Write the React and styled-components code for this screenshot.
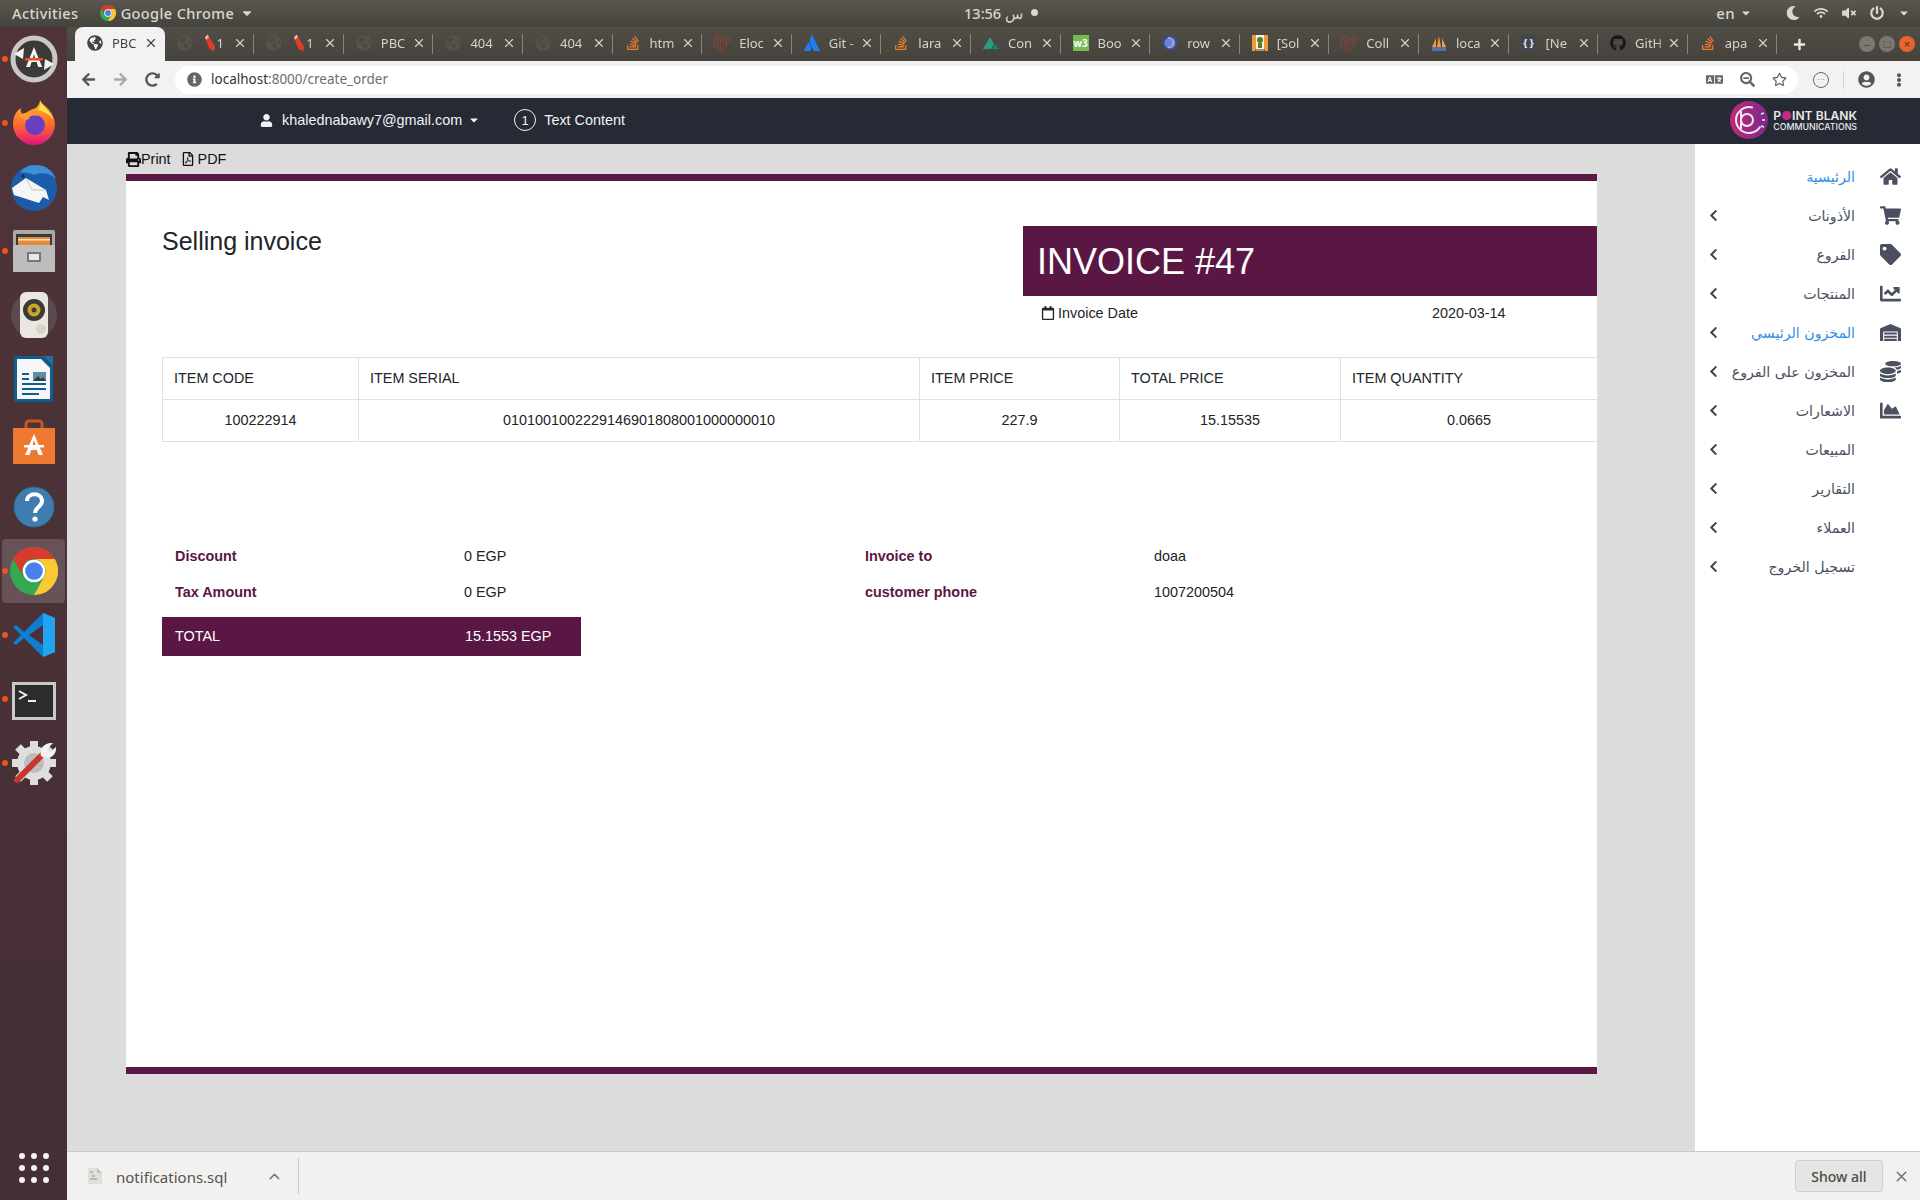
import styled, { createGlobalStyle } from "styled-components";
import {
  FaHome,
  FaShoppingCart,
  FaTag,
  FaChartLine,
  FaWarehouse,
  FaCoins,
  FaChartArea,
  FaChevronLeft,
  FaPrint,
  FaRegFilePdf,
  FaRegCalendar,
  FaUser,
  FaLaravel,
  FaAtlassian,
  FaStackOverflow,
  FaGithub,
  FaGlobeAmericas,
  FaCaretDown,
  FaMoon,
  FaWifi,
  FaVolumeMute,
  FaPowerOff,
  FaArrowLeft,
  FaArrowRight,
  FaRedoAlt,
  FaInfoCircle,
  FaRegStar,
  FaSearchMinus,
  FaUserCircle,
  FaEllipsisV,
  FaLanguage,
  FaPlus,
} from "react-icons/fa";
import { FiX, FiChevronUp } from "react-icons/fi";

const GlobalStyle = createGlobalStyle`
  html, body {
    margin: 0;
    padding: 0;
    background: #dcdcdc;
  }
  body {
    font-family: "Liberation Sans", Arial, sans-serif;
    font-size: 14.4px;
    color: #212529;
  }
  * { box-sizing: border-box; }
`;

const Screen = styled.div`
  width: 1920px;
  height: 1200px;
  overflow: hidden;
  display: flex;
  flex-direction: column;
`;

/* gnome top bar */
const TopBar = styled.div`
  height: 27px;
  flex: none;
  display: grid;
  grid-template-columns: 1fr auto 1fr;
  align-items: center;
  background: linear-gradient(#5a574f, #44433d);
  color: #d8d8d2;
  font-family: "Noto Sans", sans-serif;
  font-size: 14.5px;
  font-weight: 500;
  letter-spacing: 0.4px;
  padding: 0 10px 2px 12px;
`;

const TopLeft = styled.div`
  display: flex;
  align-items: center;
`;

const TopLabel = styled.span`
  margin-right: ${p => p.$gap || 0}px;
`;

const Clock = styled.div`
  display: flex;
  align-items: center;
  gap: 8px;
  margin-left: 80px;
`;

const ClockDot = styled.span`
  width: 7px;
  height: 7px;
  border-radius: 50%;
  background: #d8d8d2;
`;

const TopRight = styled.div`
  display: flex;
  align-items: center;
  justify-content: flex-end;
  gap: 14px;
  font-size: 15px;

  svg {
    font-size: 14px;
  }
`;

const Lang = styled.span`
  display: flex;
  align-items: center;
  gap: 5px;
  margin-right: 20px;
`;

const Body = styled.div`
  flex: 1;
  display: flex;
  min-height: 0;
`;

/* ubuntu dock */
const Dock = styled.div`
  width: 67px;
  flex: none;
  display: flex;
  flex-direction: column;
  background: linear-gradient(#503439, #432f34);
`;

const DockItem = styled.div`
  height: 64px;
  flex: none;
  display: flex;
  align-items: center;
  justify-content: center;
  position: relative;
  border-radius: 4px;
  margin: 0 2px;
  background: ${p => (p.$focused ? "rgba(255,255,255,0.16)" : "transparent")};

  svg {
    width: 48px;
    height: 48px;
  }
`;

const RunDot = styled.span`
  position: absolute;
  left: 0;
  top: 29px;
  width: 6px;
  height: 6px;
  border-radius: 50%;
  background: #e95420;
`;

const AppGrid = styled.div`
  margin-top: auto;
  margin-bottom: 17px;
  align-self: center;
  display: grid;
  grid-template-columns: repeat(3, 6px);
  gap: 6px;
`;

const GridDot = styled.span`
  width: 6px;
  height: 6px;
  border-radius: 50%;
  background: #f4f2f2;
`;

/* chrome */
const Browser = styled.div`
  flex: 1;
  min-width: 0;
  display: flex;
  flex-direction: column;
`;

const TabStrip = styled.div`
  height: 34px;
  flex: none;
  display: flex;
  align-items: stretch;
  padding-left: 8px;
  background: linear-gradient(#504d45, #45433c);
`;

const Tab = styled.div`
  width: 89.6px;
  flex: none;
  display: flex;
  align-items: center;
  padding: 0 7px 2px 12px;
  position: relative;
  font-family: "Noto Sans", sans-serif;
  font-size: 13px;
  color: ${p => (p.$active ? "#45433d" : "#d4d3ce")};
  background: ${p => (p.$active ? "#f2f2f2" : "transparent")};
  border-radius: ${p => (p.$active ? "8px 8px 0 0" : "0")};

  &::after {
    content: "";
    display: ${p => (p.$active ? "none" : "block")};
    position: absolute;
    right: 0;
    top: 7px;
    bottom: 7px;
    width: 1px;
    background: #86847c;
  }
`;

const FavIcon = styled.span`
  width: 16px;
  height: 16px;
  flex: none;
  margin-right: 9px;
  display: flex;
  align-items: center;
  justify-content: center;
  font-size: ${p => (p.$small ? 10 : 16)}px;
  font-weight: ${p => (p.$small ? 700 : 400)};
  color: ${p => p.$color || "#45433d"};
  background: ${p => p.$bg || "transparent"};
`;

const TabTitle = styled.span`
  flex: 1;
  min-width: 0;
  overflow: hidden;
  white-space: nowrap;
  display: flex;
  align-items: center;
  -webkit-mask-image: linear-gradient(90deg, #000 70%, transparent);
  mask-image: linear-gradient(90deg, #000 70%, transparent);
`;

const TabClose = styled.span`
  flex: none;
  display: flex;
  font-size: 14px;
`;

const NewTab = styled.span`
  margin-left: 16px;
  display: flex;
  align-items: center;
  color: #e8e8e4;
  font-size: 13px;
`;

const WinButtons = styled.div`
  margin-left: auto;
  padding-right: 5px;
  display: flex;
  align-items: center;
  gap: 4px;
`;

const WinButton = styled.span`
  width: 16px;
  height: 16px;
  border-radius: 50%;
  display: flex;
  align-items: center;
  justify-content: center;
  font-size: 11px;
  line-height: 1;
  color: ${p => (p.$close ? "#4a2a1a" : "#4a4944")};
  background: ${p => (p.$close ? "#e9632e" : "#7a7870")};
`;

const Toolbar = styled.div`
  height: 37px;
  flex: none;
  display: flex;
  align-items: center;
  padding-left: 14px;
  background: #f2f2f2;
  color: #5a5a5a;
`;

const NavButton = styled.span`
  width: 32px;
  flex: none;
  display: flex;
  font-size: 15px;
  color: ${p => (p.$off ? "#a8a8a8" : "#555")};
`;

const Omnibox = styled.div`
  width: 1623px;
  height: 28px;
  margin-left: -2px;
  display: flex;
  align-items: center;
  padding: 0 11px 0 12px;
  background: #fff;
  border-radius: 14px;
  font-family: "Noto Sans", sans-serif;
  font-size: 13.5px;
  color: #6e6e6e;
`;

const Url = styled.span`
  flex: 1;
  margin-left: 9px;
  padding-bottom: 2px;

  b {
    font-weight: 400;
    color: #333;
  }
`;

const OmniIcon = styled.span`
  display: flex;
  font-size: ${p => p.$size || 15}px;
  margin-left: ${p => p.$gap || 0}px;
  color: #666;
`;

const ToolIcons = styled.div`
  flex: 1;
  display: flex;
  align-items: center;
  font-size: 17px;
  color: #555;
`;

const ExtBadge = styled.span`
  width: 16px;
  height: 16px;
  margin-left: 15px;
  border: 1px solid #666;
  border-radius: 50%;
  display: flex;
  align-items: center;
  justify-content: center;
  font-size: 8px;
  line-height: 1;
`;

const ToolDivider = styled.span`
  width: 1px;
  height: 18px;
  margin: 0 14px;
  background: #d0d0d0;
`;

const MenuDots = styled.span`
  display: flex;
  margin-left: 17px;
  font-size: 14px;
`;

/* page header */
const NavBar = styled.div`
  height: 46px;
  flex: none;
  display: flex;
  align-items: center;
  padding: 0 0 2px 193px;
  background: #252a35;
  color: #f2f2f2;
`;

const UserMenu = styled.div`
  display: flex;
  align-items: center;
  gap: 9px;
`;

const UserCaret = styled.span`
  margin-left: -3px;
  display: flex;
  font-size: 12px;
`;

const CountCircle = styled.span`
  width: 22px;
  height: 22px;
  margin-left: 34px;
  border: 1px solid #f2f2f2;
  border-radius: 50%;
  display: flex;
  align-items: center;
  justify-content: center;
  font-size: 13px;
`;

const NavText = styled.span`
  margin-left: 8px;
`;

const Brand = styled.div`
  margin-left: auto;
  margin-right: 63px;
  display: flex;
  align-items: center;
  gap: 5px;

  svg {
    width: 38px;
    height: 38px;
  }
`;

const BrandText = styled.div`
  display: flex;
  flex-direction: column;
  font-family: Inter, sans-serif;
  color: #e9e9ea;
`;

const BrandName = styled.span`
  font-size: 12.1px;
  font-weight: 600;
  line-height: 13px;
  white-space: nowrap;

  i {
    font-style: normal;
    color: #c22a86;
  }
`;

const BrandSub = styled.span`
  font-size: 8.8px;
  font-weight: 500;
  line-height: 10px;
`;

const Main = styled.div`
  flex: 1;
  min-height: 0;
  display: flex;
  background: #dcdcdc;
`;

const Content = styled.div`
  flex: 1;
  min-width: 0;
  padding-left: 59px;
`;

const Actions = styled.div`
  height: 30px;
  display: flex;
  align-items: center;
  color: #111;
`;

const Action = styled.span`
  display: flex;
  align-items: center;
  gap: ${p => p.$gap}px;
  margin-right: 10px;
`;

const Sheet = styled.div`
  width: 1471px;
  height: 900px;
  display: flex;
  flex-direction: column;
  padding-left: 36px;
  background: #fff;
  border-top: 7px solid #5a1744;
  border-bottom: 7px solid #5a1744;
`;

const SheetHead = styled.div`
  display: flex;
  justify-content: space-between;
  padding-top: 45px;
`;

const Title = styled.h1`
  margin: 0;
  font-size: 25px;
  font-weight: 400;
  line-height: 30px;
  color: #212529;
`;

const InvoiceMeta = styled.div`
  width: 574px;
`;

const InvoiceBanner = styled.div`
  height: 70px;
  display: flex;
  align-items: center;
  padding: 2px 0 0 14px;
  background: #5a1744;
  color: #fff;
  font-size: 36px;
`;

const MetaRow = styled.div`
  height: 34px;
  display: flex;
  align-items: center;
  padding-left: 18px;
`;

const MetaLabel = styled.span`
  width: 391px;
  display: flex;
  align-items: center;
  gap: 3px;
`;

const ItemsTable = styled.table`
  width: 1435px;
  margin-top: 27px;
  border-collapse: collapse;
  table-layout: fixed;
`;

const Th = styled.th`
  width: ${p => p.$w}px;
  height: 42px;
  padding: 0 11px 2px;
  border: 1px solid #dee2e6;
  font-weight: 400;
  text-align: left;
`;

const Td = styled.td`
  height: 42px;
  padding: 0 11px 2px;
  border: 1px solid #dee2e6;
  text-align: center;
`;

const Summary = styled.div`
  display: flex;
  gap: 271px;
  margin-top: 96px;
`;

const SummaryCol = styled.div`
  width: 419px;
`;

const SummaryRow = styled.div`
  height: 36px;
  display: flex;
  align-items: center;
  padding-left: 13px;
`;

const SummaryLabel = styled.span`
  width: 289px;
  font-weight: 700;
  color: #5a1744;
`;

const TotalRow = styled.div`
  height: 39px;
  margin-top: 7px;
  display: flex;
  align-items: center;
  padding: 0 0 2px 13px;
  background: #5a1744;
  color: #fff;
`;

const TotalLabel = styled.span`
  width: 290px;
`;

/* right side menu */
const SideMenu = styled.div`
  width: 225px;
  flex: none;
  padding-top: 13px;
  background: #fff;
  direction: rtl;
`;

const MenuItem = styled.div`
  height: 39px;
  display: flex;
  align-items: center;
  padding: 0 18px 0 12px;
  font-family: "DejaVu Sans", sans-serif;
  font-size: 14.2px;
  color: ${p => (p.$active ? "#2f8fe8" : "#4a5060")};
`;

const MenuIcon = styled.span`
  width: 24px;
  flex: none;
  display: flex;
  justify-content: center;
  margin-left: 23px;
  color: #4a5060;
  font-size: 21px;
`;

const MenuChevron = styled.span`
  margin-right: auto;
  display: flex;
  color: #3d4350;
  font-size: 13px;
`;

/* download shelf */
const Shelf = styled.div`
  height: 49px;
  flex: none;
  display: flex;
  align-items: center;
  padding: 0 10px 0 21px;
  background: #f2f1f0;
  border-top: 1px solid #c9c9c9;
  font-family: "Noto Sans", sans-serif;
  color: #55534f;

  svg.file {
    flex: none;
  }
`;

const FileName = styled.span`
  margin: 1px 0 0 14px;
  font-size: 15px;
  width: 150px;
`;

const ShelfChevron = styled.span`
  display: flex;
  font-size: 17px;
  color: #777;
`;

const ShelfDivider = styled.span`
  width: 1px;
  height: 36px;
  margin-left: 15px;
  background: #c9c9c9;
`;

const ShowAll = styled.button`
  margin-left: auto;
  width: 88px;
  height: 32px;
  border: 1px solid #d2d0cd;
  border-radius: 3px;
  background: #e6e5e3;
  color: #4a4a48;
  font-family: "Noto Sans", sans-serif;
  font-size: 14px;
  font-weight: 500;
`;

const ShelfClose = styled.span`
  margin-left: 10px;
  display: flex;
  font-size: 17px;
  color: #6d6d6b;
`;

const ChromeLogo = props => (
  <svg viewBox="0 0 24 24" {...props}>
    <circle cx="12" cy="12" r="12" fill="#34a853" />
    <path d="M22.4 6A12 12 0 0 1 12 24L17 15A6 6 0 0 0 12 6Z" fill="#fcc934" />
    <path d="M12 0A12 12 0 0 1 22.4 6H12A6 6 0 0 0 6.8 15L1.6 6A12 12 0 0 1 12 0Z" fill="#d93a2e" />
    <circle cx="12" cy="12" r="5.6" fill="#fff" />
    <circle cx="12" cy="12" r="4.4" fill="#4a80ee" />
  </svg>
);

const UpdaterIcon = () => (
  <svg viewBox="0 0 48 48">
    <circle cx="24" cy="24" r="21" fill="none" stroke="#c8c8c6" strokeWidth="5" />
    <circle cx="24" cy="24" r="18" fill="#3b3a38" />
    <path d="M4 19l10-6-1 11zM44 29l-10 6 1-11z" fill="#f4f4f4" />
    <path d="M24 12l-8 20h4l1.6-5h5l1.6 5h4zM23 23l1-4 1 4z" fill="#f6f6f6" />
    <rect x="15" y="23" width="18" height="2.5" fill="#e95420" />
  </svg>
);

const FirefoxIcon = () => (
  <svg viewBox="0 0 48 48">
    <defs>
      <linearGradient id="ff" x1="0" y1="0" x2="0" y2="1">
        <stop offset="0" stopColor="#ffbd2e" />
        <stop offset="0.55" stopColor="#ff6a2b" />
        <stop offset="1" stopColor="#e3127f" />
      </linearGradient>
    </defs>
    <path d="M30 1c1 5 14 9 15 24A21 21 0 0 1 3 25C3 18 6 12 11 9c-1 4 1 6 3 7 3-4 8-6 12-7 2-2 4-5 4-8z" fill="url(#ff)" />
    <circle cx="25" cy="26" r="10" fill="#6b3dc0" />
    <path d="M9 16c6-3 14-4 19 1-6-2-9 0-9 3-5 2-9-1-10-4z" fill="#ff9a2e" />
    <path d="M30 1c1 6 12 12 13 20-3-6-10-9-15-10 2-3 3-6 2-10z" fill="#ffe14d" />
  </svg>
);

const ThunderbirdIcon = () => (
  <svg viewBox="0 0 48 48">
    <circle cx="24" cy="25" r="23" fill="#1c5ba8" />
    <path d="M10 10c3-5 8-8 16-8 10 0 17 6 20 14-6-6-14-7-22-4-4-2-9-3-14-2z" fill="#3a8fd8" />
    <circle cx="13" cy="13" r="1.500" fill="#10294a" />
    <path d="M2 25l14-10 20 12 3 10-6-3-4 6-25-8z" fill="#f6f6f6" />
    <path d="M16 15l6 12 14 0" fill="none" stroke="#c4c4c4" strokeWidth="1" />
  </svg>
);

const FilesIcon = () => (
  <svg viewBox="0 0 48 48">
    <rect x="3" y="3" width="42" height="42" rx="2" fill="#a9a9a7" />
    <rect x="6" y="7" width="36" height="13" fill="#3a3936" />
    <rect x="8" y="10" width="32" height="8" fill="#e78a3a" />
    <rect x="8" y="12" width="32" height="1.500" fill="#f6e3c4" />
    <rect x="3" y="18" width="42" height="27" rx="1" fill="#bdbdbb" />
    <rect x="17" y="25" width="14" height="10" rx="1" fill="#777" />
    <rect x="19" y="27" width="10" height="6" fill="#e8e8e8" />
  </svg>
);

const SpeakerIcon = () => (
  <svg viewBox="0 0 48 48">
    <circle cx="24" cy="24" r="23" fill="#5a4a50" />
    <rect x="10" y="1" width="28" height="46" rx="6" fill="#e9e7df" />
    <circle cx="24" cy="19" r="11" fill="#3b3a36" />
    <circle cx="24" cy="19" r="6.500" fill="#c9a62a" />
    <circle cx="24" cy="19" r="2.500" fill="#3b3a36" />
    <circle cx="31" cy="38" r="5" fill="#d6d4cc" />
  </svg>
);

const WriterIcon = () => (
  <svg viewBox="0 0 48 48">
    <path d="M6 1h26l11 11v33a2 2 0 0 1-2 2H6a2 2 0 0 1-2-2V3a2 2 0 0 1 2-2z" fill="#125d8f" />
    <path d="M7 4h24l9 9v31H7z" fill="#f4f6f7" />
    <path d="M33 1h10v10z" fill="#1b6fa8" />
    <path d="M12 18h7v2h-7zM12 23h7v2h-7zM12 28h24v2H12zM12 33h24v2H12zM12 38h17v2H12z" fill="#125d8f" />
    <rect x="23" y="17" width="13" height="9" fill="#5f8ea8" />
    <path d="M23 26l5-5 3 3 2-2 3 4z" fill="#3a3a38" />
  </svg>
);

const StoreIcon = () => (
  <svg viewBox="0 0 48 48">
    <path d="M16 10V5a3 3 0 0 1 3-3h10a3 3 0 0 1 3 3v5" fill="none" stroke="#c9551f" strokeWidth="3" />
    <path d="M3 9h42v36H3z" fill="#ee7a32" />
    <path d="M24 15l-9 21h4.500l1.600-5h5.800l1.600 5h4.500zM22.500 26l1.500-5 1.500 5z" fill="#fff" />
    <rect x="14" y="26" width="20" height="2.500" fill="#fff" />
  </svg>
);

const HelpIcon = () => (
  <svg viewBox="0 0 48 48">
    <circle cx="24" cy="24" r="20" fill="#3f7cb0" stroke="#2f6896" />
    <path d="M17 18c0-9 15-9 15 0 0 6-7 6-7 12" fill="none" stroke="#fff" strokeWidth="4" />
    <circle cx="25" cy="36" r="2.600" fill="#fff" />
  </svg>
);

const VsCodeIcon = () => (
  <svg viewBox="0 0 48 48">
    <path d="M33 2L14 21 6 14l-3 2 8 8-8 8 3 2 8-7 19 19 12-5V7z" fill="#0e7fd0" />
    <path d="M33 2l12 5v34l-12 5z" fill="#22a5f1" />
    <path d="M33 14v20L19 24z" fill="#4a3138" />
  </svg>
);

const TerminalIcon = () => (
  <svg viewBox="0 0 48 48">
    <rect x="2" y="7" width="44" height="38" fill="#c9c9c7" />
    <rect x="5" y="10" width="38" height="32" fill="#2c2c2a" />
    <path d="M9 16l7 4-7 4" fill="none" stroke="#f2f2f2" strokeWidth="2" />
    <rect x="18" y="25" width="8" height="2" fill="#f2f2f2" />
  </svg>
);

const SettingsIcon = () => (
  <svg viewBox="0 0 48 48">
    <path d="M24 2v8M24 38v8M2 24h8M38 24h8M8 8l6 6M34 34l6 6M8 40l6-6M34 14l6-6" stroke="#dedede" strokeWidth="8" />
    <circle cx="24" cy="24" r="17" fill="#dedede" />
    <circle cx="24" cy="24" r="10" fill="#bcbcbc" />
    <path d="M7 41L33 15" stroke="#c7362b" strokeWidth="6" strokeLinecap="round" />
    <path d="M31 17c-2-7 3-14 12-13l-6 6 3 3 6-5c1 9-8 14-15 9z" fill="#f2f2f2" />
  </svg>
);

const PencilIcon = () => (
  <svg viewBox="0 0 16 20" width="15" height="20">
    <path d="M3 4l3-3 8 13-1 5-5-3z" fill="#e33a2c" />
    <path d="M3 4l3-3 1.500 2.500-3 3z" fill="#f2b4a8" />
  </svg>
);

const NuxtIcon = () => (
  <svg viewBox="0 0 16 16" width="16" height="16">
    <path d="M0 14L7 2l4 7-3 5z" fill="#2a9d7c" />
    <path d="M9 14l3-5 4 5z" fill="#108775" />
  </svg>
);

const RowIcon = () => (
  <svg viewBox="0 0 16 16" width="16" height="16">
    <circle cx="8" cy="8" r="7.500" fill="#3f4a8f" />
    <circle cx="8" cy="8" r="5.500" fill="#6f82d8" />
    <path d="M6 3c3-1 6 2 5 6-1 3-3 4-5 3" fill="none" stroke="#c6cff2" />
  </svg>
);

const RobotIcon = () => (
  <svg viewBox="0 0 16 16" width="16" height="16">
    <rect width="16" height="16" fill="#ef9a3c" />
    <rect x="4" y="0" width="8" height="16" fill="#f6f1df" />
    <circle cx="8" cy="5" r="3" fill="#5c7a2a" />
    <rect x="6" y="8" width="4" height="5" fill="#5c7a2a" />
    <path d="M3 15h10" stroke="#3a3a2a" />
  </svg>
);

const SailsIcon = () => (
  <svg viewBox="0 0 16 16" width="16" height="16">
    <path d="M1 12L5 3v9zM6 12l2-11 2 11zM11 3l4 9h-4z" fill="#ef9a3c" />
    <rect x="1" y="12" width="14" height="4" fill="#5a6fb0" />
  </svg>
);

const FileIcon = () => (
  <svg className="file" viewBox="0 0 14 16" width="14" height="16">
    <path d="M0 0h9l5 5v11H0z" fill="#e2e0dd" />
    <path d="M9 0l5 5H9z" fill="#c4c2bf" />
    <path d="M2 4h3M4 8h3M2 11h7" stroke="#8f8d8a" />
  </svg>
);

const LogoMark = () => (
  <svg viewBox="0 0 38 38">
    <defs>
      <linearGradient id="pb" x1="0" y1="0" x2="1" y2="0">
        <stop offset="0" stopColor="#c2287a" />
        <stop offset="1" stopColor="#7a2a8a" />
      </linearGradient>
    </defs>
    <circle cx="19" cy="19" r="19" fill="url(#pb)" />
    <circle cx="19" cy="19" r="13" fill="none" stroke="#f0e8ee" strokeWidth="2" strokeDasharray="58 24" transform="rotate(30 19 19)" />
    <circle cx="17" cy="19" r="6" fill="none" stroke="#f0e8ee" strokeWidth="2" />
    <path d="M11 10v18" stroke="#f0e8ee" strokeWidth="2" />
    <path d="M31 13l3-1M32 19h3M31 25l3 1" stroke="#f0e8ee" strokeWidth="1.500" />
  </svg>
);

const dockApps = [
  { icon: <UpdaterIcon />, running: true },
  { icon: <FirefoxIcon />, running: true },
  { icon: <ThunderbirdIcon /> },
  { icon: <FilesIcon />, running: true },
  { icon: <SpeakerIcon /> },
  { icon: <WriterIcon /> },
  { icon: <StoreIcon /> },
  { icon: <HelpIcon /> },
  { icon: <ChromeLogo />, running: true, focused: true },
  { icon: <VsCodeIcon />, running: true },
  { icon: <TerminalIcon />, running: true },
  { icon: <SettingsIcon />, running: true },
];

const dim = <FaGlobeAmericas />;
const dimColor = "#55534b";

const tabs = [
  { fav: <FaGlobeAmericas />, title: "PBC", active: true },
  { fav: dim, color: dimColor, title: <><PencilIcon />1</> },
  { fav: dim, color: dimColor, title: <><PencilIcon />1</> },
  { fav: dim, color: dimColor, title: "PBC" },
  { fav: dim, color: dimColor, title: "404" },
  { fav: dim, color: dimColor, title: "404" },
  { fav: <FaStackOverflow />, color: "#ef7b2c", title: "htm" },
  { fav: <FaLaravel />, color: "#b93a35", title: "Eloc" },
  { fav: <FaAtlassian />, color: "#1f7cf2", title: "Git -" },
  { fav: <FaStackOverflow />, color: "#ef7b2c", title: "lara" },
  { fav: <NuxtIcon />, title: "Con" },
  { fav: "w3", color: "#fff", bg: "#76b852", small: true, title: "Boo" },
  { fav: <RowIcon />, title: "row" },
  { fav: <RobotIcon />, title: "[Sol" },
  { fav: <FaLaravel />, color: "#b93a35", title: "Coll" },
  { fav: <SailsIcon />, title: "loca" },
  { fav: "{ }", color: "#f2f2f2", bg: "#3f4650", small: true, title: "[Ne" },
  { fav: <FaGithub />, color: "#17161a", title: "GitH" },
  { fav: <FaStackOverflow />, color: "#ef7b2c", title: "apa" },
];

const menu = [
  { label: "الرئيسية", icon: <FaHome />, active: true, plain: true },
  { label: "الأذونات", icon: <FaShoppingCart /> },
  { label: "الفروع", icon: <FaTag /> },
  { label: "المنتجات", icon: <FaChartLine /> },
  { label: "المخزون الرئيسي", icon: <FaWarehouse />, active: true },
  { label: "المخزون على الفروع", icon: <FaCoins /> },
  { label: "الاشعارات", icon: <FaChartArea /> },
  { label: "المبيعات" },
  { label: "التقارير" },
  { label: "العملاء" },
  { label: "تسجيل الخروج" },
];

const App = () => {
  return (
    <Screen>
      <GlobalStyle />
      <TopBar>
        <TopLeft>
          <TopLabel $gap={22}>Activities</TopLabel>
          <ChromeLogo width="16" height="16" />
          <TopLabel $gap={6}>&nbsp;Google Chrome</TopLabel>
          <FaCaretDown size={14} />
        </TopLeft>
        <Clock>
          <span>13:56 س</span>
          <ClockDot />
        </Clock>
        <TopRight>
          <Lang>en <FaCaretDown size={12} /></Lang>
          <FaMoon />
          <FaWifi />
          <FaVolumeMute />
          <FaPowerOff />
          <FaCaretDown size={12} />
        </TopRight>
      </TopBar>
      <Body>
        <Dock>
          {dockApps.map((app, i) => (
            <DockItem key={i} $focused={app.focused}>
              {app.running && <RunDot />}
              {app.icon}
            </DockItem>
          ))}
          <AppGrid>
            {Array.from({ length: 9 }, (_, i) => <GridDot key={i} />)}
          </AppGrid>
        </Dock>
        <Browser>
          <TabStrip>
            {tabs.map((tab, i) => (
              <Tab key={i} $active={tab.active}>
                <FavIcon $color={tab.color} $bg={tab.bg} $small={tab.small}>
                  {tab.fav}
                </FavIcon>
                <TabTitle>{tab.title}</TabTitle>
                <TabClose><FiX /></TabClose>
              </Tab>
            ))}
            <NewTab><FaPlus /></NewTab>
            <WinButtons>
              <WinButton>–</WinButton>
              <WinButton>□</WinButton>
              <WinButton $close>×</WinButton>
            </WinButtons>
          </TabStrip>
          <Toolbar>
            <NavButton><FaArrowLeft /></NavButton>
            <NavButton $off><FaArrowRight /></NavButton>
            <NavButton><FaRedoAlt /></NavButton>
            <Omnibox>
              <OmniIcon><FaInfoCircle /></OmniIcon>
              <Url><b>localhost</b>:8000/create_order</Url>
              <OmniIcon $size={17}><FaLanguage /></OmniIcon>
              <OmniIcon $gap={17}><FaSearchMinus /></OmniIcon>
              <OmniIcon $gap={17}><FaRegStar /></OmniIcon>
            </Omnibox>
            <ToolIcons>
              <ExtBadge>···</ExtBadge>
              <ToolDivider />
              <FaUserCircle />
              <MenuDots><FaEllipsisV /></MenuDots>
            </ToolIcons>
          </Toolbar>
          <NavBar>
            <UserMenu>
              <FaUser size={13} />
              <span>khalednabawy7@gmail.com</span>
              <UserCaret><FaCaretDown /></UserCaret>
            </UserMenu>
            <CountCircle>1</CountCircle>
            <NavText>Text Content</NavText>
            <Brand>
              <LogoMark />
              <BrandText>
                <BrandName>P<i>●</i>INT BLANK</BrandName>
                <BrandSub>COMMUNICATIONS</BrandSub>
              </BrandText>
            </Brand>
          </NavBar>
          <Main>
            <Content>
              <Actions>
                <Action $gap={0}><FaPrint size={15} />Print</Action>
                <Action $gap={3}><FaRegFilePdf size={14} />PDF</Action>
              </Actions>
              <Sheet>
                <SheetHead>
                  <Title>Selling invoice</Title>
                  <InvoiceMeta>
                    <InvoiceBanner>INVOICE #47</InvoiceBanner>
                    <MetaRow>
                      <MetaLabel><FaRegCalendar size={14} />Invoice Date</MetaLabel>
                      <span>2020-03-14</span>
                    </MetaRow>
                  </InvoiceMeta>
                </SheetHead>
                <ItemsTable>
                  <thead>
                    <tr>
                      <Th $w={196}>ITEM CODE</Th>
                      <Th $w={561}>ITEM SERIAL</Th>
                      <Th $w={200}>ITEM PRICE</Th>
                      <Th $w={221}>TOTAL PRICE</Th>
                      <Th $w={257}>ITEM QUANTITY</Th>
                    </tr>
                  </thead>
                  <tbody>
                    <tr>
                      <Td>100222914</Td>
                      <Td>0101001002229146901808001000000010</Td>
                      <Td>227.9</Td>
                      <Td>15.15535</Td>
                      <Td>0.0665</Td>
                    </tr>
                  </tbody>
                </ItemsTable>
                <Summary>
                  <SummaryCol>
                    <SummaryRow><SummaryLabel>Discount</SummaryLabel>0 EGP</SummaryRow>
                    <SummaryRow><SummaryLabel>Tax Amount</SummaryLabel>0 EGP</SummaryRow>
                    <TotalRow><TotalLabel>TOTAL</TotalLabel>15.1553 EGP</TotalRow>
                  </SummaryCol>
                  <SummaryCol>
                    <SummaryRow><SummaryLabel>Invoice to</SummaryLabel>doaa</SummaryRow>
                    <SummaryRow><SummaryLabel>customer phone</SummaryLabel>1007200504</SummaryRow>
                  </SummaryCol>
                </Summary>
              </Sheet>
            </Content>
            <SideMenu>
              {menu.map(item => (
                <MenuItem key={item.label} $active={item.active}>
                  <MenuIcon>{item.icon}</MenuIcon>
                  <span>{item.label}</span>
                  {!item.plain && <MenuChevron><FaChevronLeft /></MenuChevron>}
                </MenuItem>
              ))}
            </SideMenu>
          </Main>
          <Shelf>
            <FileIcon />
            <FileName>notifications.sql</FileName>
            <ShelfChevron><FiChevronUp /></ShelfChevron>
            <ShelfDivider />
            <ShowAll>Show all</ShowAll>
            <ShelfClose><FiX /></ShelfClose>
          </Shelf>
        </Browser>
      </Body>
    </Screen>
  );
};

export default App;
